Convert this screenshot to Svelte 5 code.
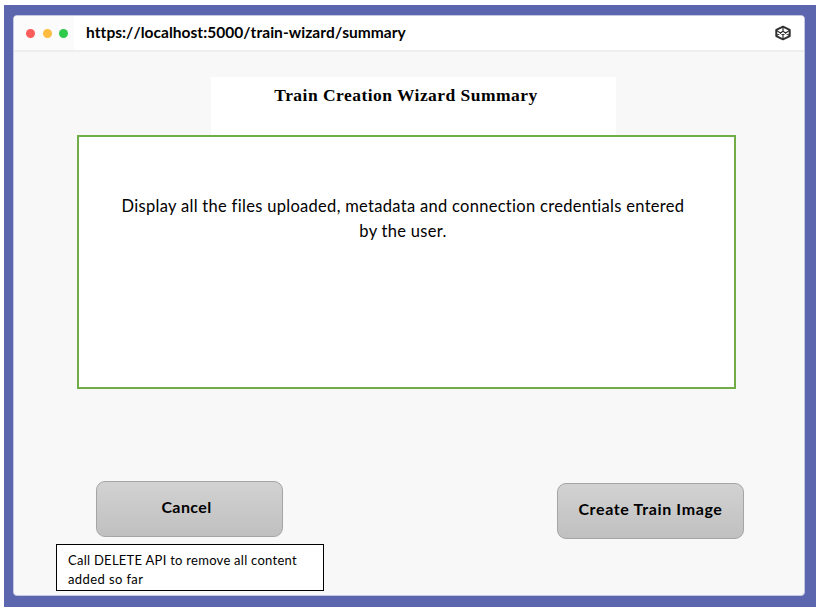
<script>
  const url = 'https://localhost:5000/train-wizard/summary';
  const lights = ['#fc5c5a', '#fdbc40', '#2fc94c'];
</script>

<main class="frame">
  <section class="window">
    <header class="bar">
      <div class="lights">
        {#each lights as color}
          <span class="light" style="background: {color}"></span>
        {/each}
      </div>
      <div class="address"><span class="url">{url}</span></div>
      <svg class="logo" width="18" height="16" viewBox="0 0 18 16" fill="none" stroke="#303032" stroke-width="2" stroke-linejoin="round">
        <path d="M9 1.7 15.7 4.9V11.1L9 14.3 2.3 11.1V4.9Z" />
        <path d="M9 1.7V6M9 10V14.3M2.3 5.2 9 9.7 15.7 5.2M2.3 10.8 9 6.3 15.7 10.8" stroke-width="1.2" />
      </svg>
    </header>

    <div class="page">
      <h1><span>Train Creation Wizard Summary</span></h1>
      <div class="summary">
        <p>
          <span class="line first">Display all the files uploaded, metadata and connection credentials entered</span>
          <span class="line second">by the user.</span>
        </p>
      </div>
      <div class="actions">
        <div class="cancel-group">
          <button class="cancel"><span>Cancel</span></button>
          <div class="note">
            <span class="n1">Call DELETE API to remove all content</span>
            <span class="n2">added so far</span>
          </div>
        </div>
        <button class="create"><span>Create Train Image</span></button>
      </div>
    </div>
  </section>
</main>

<style>
  :global(body) {
    background: #fff;
    overflow: hidden;
  }
  .frame {
    box-sizing: border-box;
    width: 812px;
    height: 602px;
    margin: 5px 0 0 4px;
    padding: 10px 11px 11px 9px;
    background: #5b66ae;
    font-family: Lato, "Liberation Sans", sans-serif;
    font-variant-ligatures: none;
    color: #000;
  }
  .window {
    box-sizing: border-box;
    height: 581px;
    border: 1px solid #c5c8e2;
    border-radius: 4px;
    background: #f8f8f8;
    overflow: hidden;
  }
  .bar {
    box-sizing: border-box;
    display: flex;
    align-items: center;
    height: 36px;
    border-bottom: 2px solid #eeeeee;
    background: #fff;
  }
  .lights {
    box-sizing: border-box;
    display: flex;
    align-items: center;
    gap: 7.5px;
    width: 60px;
    height: 100%;
    padding: 1px 0 0 12px;
    background: #fbfbfb;
  }
  .light {
    width: 9px;
    height: 9px;
    border-radius: 50%;
  }
  .address {
    flex: 1;
    padding: 0 0 2px 12px;
    font-size: 15.5px;
    font-weight: 700;
    line-height: 20px;
    letter-spacing: 0.04px;
    font-kerning: none;
    white-space: nowrap;
  }
  .logo {
    margin: 0 12.5px 0 0;
  }
  .page {
    display: flex;
    flex-direction: column;
    padding: 25px 0 0 63px;
  }
  h1 {
    box-sizing: border-box;
    width: 405px;
    height: 58px;
    margin: 0 0 0 134px;
    padding: 8px 15px 0 0;
    background: #fff;
    font: 700 17.5px/20px "Liberation Serif", serif;
    letter-spacing: 0.46px;
    text-align: center;
    white-space: nowrap;
  }
  .summary {
    box-sizing: border-box;
    width: 659px;
    height: 254px;
    padding: 57px 0 0;
    border: 2px solid #70ad47;
    background: #fff;
  }
  p {
    display: flex;
    flex-direction: column;
    align-items: center;
    width: 648px;
    margin: 0;
    font-size: 16.5px;
    line-height: 25px;
    letter-spacing: 0.3px;
    white-space: nowrap;
  }
  .actions {
    display: flex;
    align-items: flex-start;
    margin: 92px 0 0 -21px;
  }
  .cancel-group {
    width: 268px;
  }
  button {
    box-sizing: border-box;
    display: block;
    width: 187px;
    height: 56px;
    padding: 0 0 4px;
    border: 1px solid #a5a5a5;
    border-radius: 9px;
    background: linear-gradient(#d2d2d2, #c0c0c0);
    color: #000;
    font: 700 16px/20px Lato, "Liberation Sans", sans-serif;
    letter-spacing: 0.64px;
    white-space: nowrap;
  }
  .cancel {
    margin-left: 40px;
    padding-right: 6px;
    letter-spacing: 0.4px;
  }
  .create {
    margin: 2px 0 0 233px;
  }
  .note {
    box-sizing: border-box;
    display: flex;
    flex-direction: column;
    align-items: flex-start;
    width: 268px;
    height: 47px;
    margin-top: 7px;
    padding: 6px 0 0 11px;
    border: 1px solid #000;
    background: #fff;
    font-size: 13px;
    line-height: 19px;
    letter-spacing: 0.27px;
    white-space: nowrap;
  }
  .n2 {
    letter-spacing: 0.4px;
  }
</style>
